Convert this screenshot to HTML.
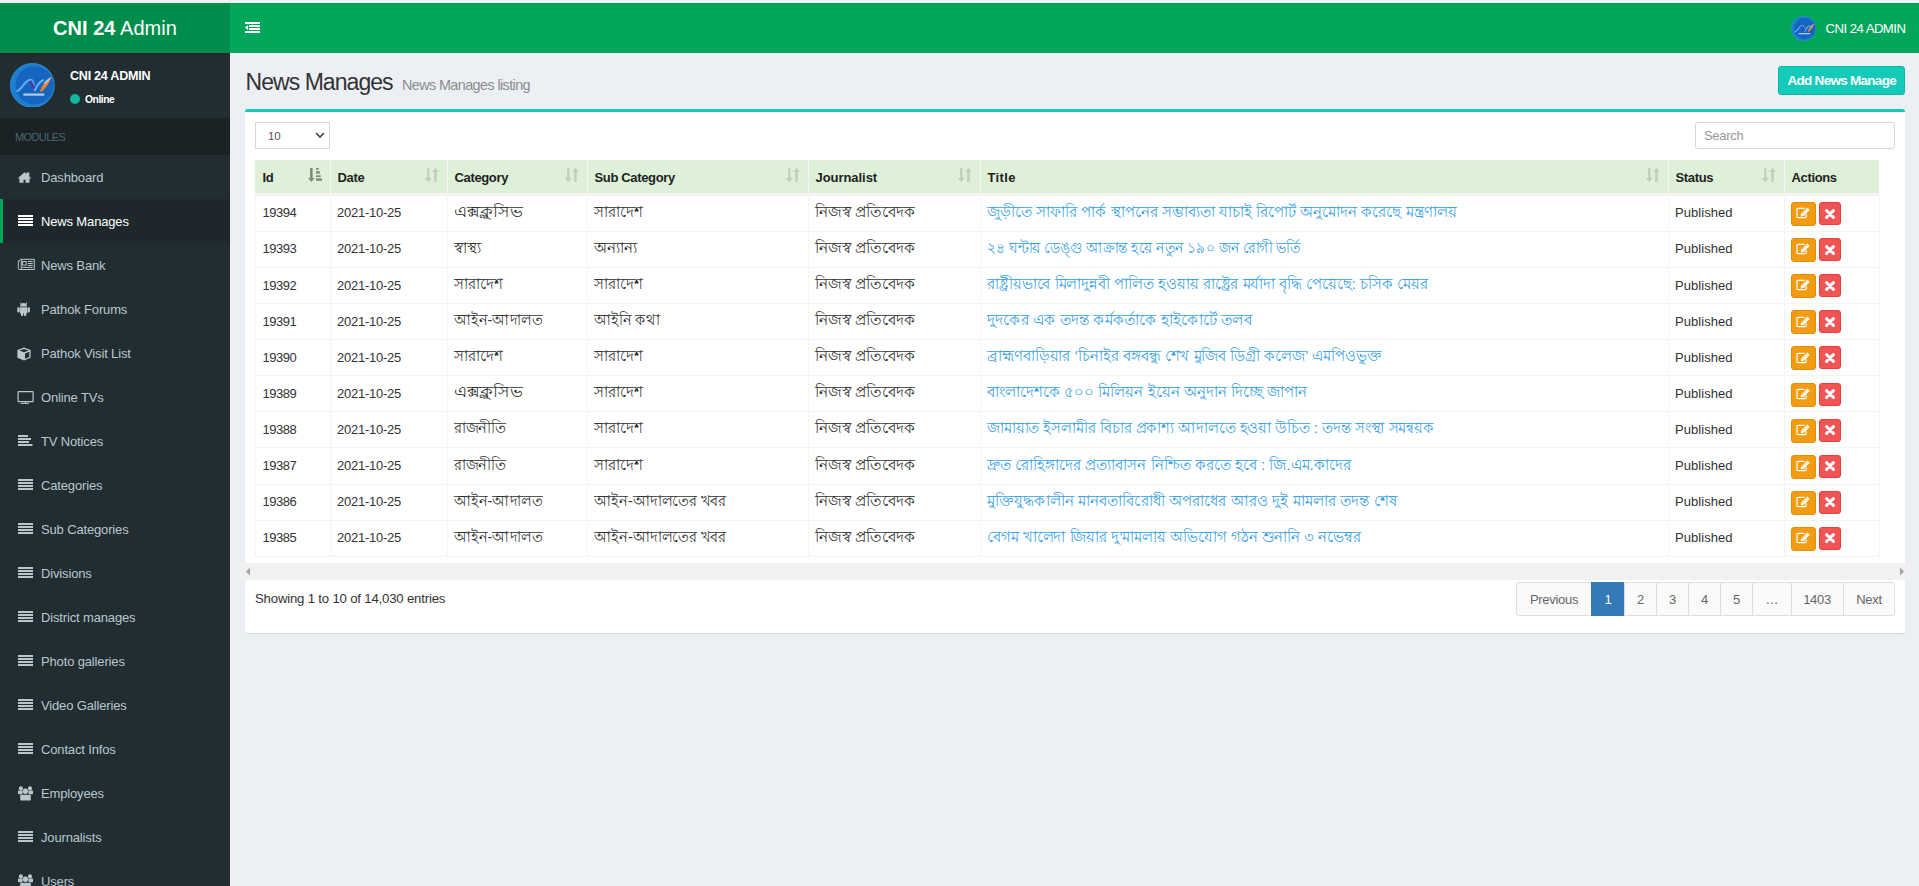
<!DOCTYPE html>
<html><head><meta charset="utf-8"><style>
*{box-sizing:border-box;margin:0;padding:0}
html,body{width:1919px;height:886px;overflow:hidden;background:#ecf0f5;font-family:"Liberation Sans",sans-serif;color:#333;font-size:13px}
.a{position:absolute}
.t{position:absolute;white-space:nowrap;line-height:1}
#strip{left:0;top:0;width:1919px;height:3px;background:#f3f3f3}
#logo{left:0;top:3px;width:230px;height:50px;background:#008d4c}
#nav{left:230px;top:3px;width:1689px;height:50px;background:#00a65a}
#side{left:0;top:53px;width:230px;height:833px;background:#222d32}
#modhdr{left:0;top:118px;width:230px;height:36.5px;background:#1a2226}
.mi{position:absolute;left:0;width:230px;height:44px;color:#b8c7ce}
.mi.act{background:#1e282c;color:#fff}
.mi.act:before{content:"";position:absolute;left:0;top:0;width:3px;height:44px;background:#00a65a}
#box{left:245px;top:109px;width:1660px;height:524px;background:#fff;border-top:3px solid #13c9b6;border-radius:3px;box-shadow:0 1px 1px rgba(0,0,0,.1)}
.hd{background:#dff0d8}
.vl{position:absolute;width:1px;background:#f4f4f4}
.hl{position:absolute;height:1px;background:#f4f4f4}
.bn{font-size:15px}
</style></head><body>
<div id="strip" class="a"></div>
<div id="logo" class="a"></div>
<div class="t" style="left:53px;top:18px;color:#fff;font-size:20px;letter-spacing:0.05px"><b>CNI 24</b> Admin</div>
<div id="nav" class="a"></div>
<svg class="a" style="left:245px;top:22px" width="15" height="12" viewBox="0 0 15 12"><g fill="#fff"><rect x="0" y="0" width="15" height="2"/><rect x="4" y="3" width="11" height="2"/><rect x="4" y="6" width="11" height="2"/><rect x="0" y="9" width="15" height="2"/><path d="M0 5.5 L3 3 V8 Z"/></g></svg>
<svg class="a" style="left:1791px;top:15.5px" width="25" height="25" viewBox="0 0 45 45"><circle cx="22.5" cy="22.5" r="22.2" fill="#1c80d0" stroke="#3d9be0" stroke-width="0.6"/><circle cx="24.8" cy="22.5" r="19.2" fill="#1565c0"/><g transform="translate(0 1.5)"><path d="M6.5 26.8 C12 26.5 14 16 20.5 15.5 C23.5 15.3 23 19 24.5 22" fill="none" stroke="#5aa8ec" stroke-width="2.4"/><path d="M20 16.5 L26 26.5" fill="none" stroke="#4a3aa8" stroke-width="2.8"/><path d="M24.5 26.5 C28 22 29 16 34 15.8" fill="none" stroke="#6fb4ee" stroke-width="2"/><path d="M30 27 C32 21 36 15 42 12.5 C40 17 37 23 31.5 27.5 Z" fill="#f0802a"/><path d="M34 19 C37 15 39.5 13.5 42 12.5 C40 15 38 17.5 35.5 20 Z" fill="#b9c6e0"/><rect x="13.5" y="29.2" width="21" height="2.2" fill="#b4cdee"/></g></svg>
<div class="t" style="left:1825.5px;top:22px;color:#fff;font-size:13.2px;letter-spacing:-0.55px">CNI 24 ADMIN</div>
<div id="side" class="a"></div>
<svg class="a" style="left:10.3px;top:62.8px" width="44.7" height="44.7" viewBox="0 0 45 45"><circle cx="22.5" cy="22.5" r="22.2" fill="#1c80d0" stroke="#3d9be0" stroke-width="0.6"/><circle cx="24.8" cy="22.5" r="19.2" fill="#1565c0"/><g transform="translate(0 1.5)"><path d="M6.5 26.8 C12 26.5 14 16 20.5 15.5 C23.5 15.3 23 19 24.5 22" fill="none" stroke="#5aa8ec" stroke-width="2.4"/><path d="M20 16.5 L26 26.5" fill="none" stroke="#4a3aa8" stroke-width="2.8"/><path d="M24.5 26.5 C28 22 29 16 34 15.8" fill="none" stroke="#6fb4ee" stroke-width="2"/><path d="M30 27 C32 21 36 15 42 12.5 C40 17 37 23 31.5 27.5 Z" fill="#f0802a"/><path d="M34 19 C37 15 39.5 13.5 42 12.5 C40 15 38 17.5 35.5 20 Z" fill="#b9c6e0"/><rect x="13.5" y="29.2" width="21" height="2.2" fill="#b4cdee"/></g></svg>
<div class="t" style="left:70px;top:70px;color:#fff;font-size:12.6px;font-weight:bold;letter-spacing:-0.27px">CNI 24 ADMIN</div>
<div class="a" style="left:70px;top:94px;width:10px;height:10px;border-radius:50%;background:#10b5a0"></div>
<div class="t" style="left:85px;top:95px;color:#fff;font-size:10.3px;font-weight:bold;letter-spacing:-0.45px">Online</div>
<div id="modhdr" class="a"></div>
<div class="t" style="left:15px;top:131.7px;color:#4b646f;font-size:11px;letter-spacing:-0.6px">MODULES</div>
<div class="mi" style="top:154.5px"><svg style="position:absolute;left:18px;top:17px" width="14" height="12" viewBox="0 0 14 12"><path fill="#b8c7ce" d="M6.5 0.3 L0 6 L0.8 6.8 L1.4 6.3 V10.7 H5.5 V7.8 H7.5 V10.7 H11.5 V6.3 L12.2 6.8 L13 6 L11.3 4.5 V0.5 H8.5 V2.1 Z"/></svg><div class="t" style="left:41px;top:16.5px;font-size:13px;letter-spacing:-0.15px">Dashboard</div></div>
<div class="mi act" style="top:198.5px"><svg style="position:absolute;left:17.5px;top:16px" width="15" height="11" viewBox="0 0 15 11"><g fill="#fff"><rect x="0" y="0" width="15" height="2"/><rect x="0" y="3" width="15" height="2"/><rect x="0" y="6" width="15" height="2"/><rect x="0" y="9" width="15" height="2"/></g></svg><div class="t" style="left:41px;top:16.5px;font-size:13px;letter-spacing:-0.15px">News Manages</div></div>
<div class="mi" style="top:242.5px"><svg style="position:absolute;left:16.5px;top:15.6px" width="19" height="13" viewBox="0 0 19 13"><g fill="none" stroke="#b8c7ce" stroke-width="1"><path d="M3 1.3 H17.3 V11.5 H2.2 Q1.3 11.5 1.3 10.6 V2.8 H3"/><path d="M4.3 1.3 V11.5"/><rect x="5.6" y="3.5" width="3.6" height="3.6"/></g><g fill="#b8c7ce"><rect x="10.8" y="3" width="4.9" height="1"/><rect x="10.8" y="5" width="4.9" height="1"/><rect x="10.8" y="6.9" width="4.9" height="1"/><rect x="5.1" y="8.9" width="10.6" height="1"/></g></svg><div class="t" style="left:41px;top:16.5px;font-size:13px;letter-spacing:-0.15px">News Bank</div></div>
<div class="mi" style="top:286.5px"><svg style="position:absolute;left:17px;top:15.2px" width="14" height="14" viewBox="0 0 14 14"><g fill="#b8c7ce"><path d="M3 4.6 Q3.2 1.3 6.6 1.1 Q10 1.3 10.2 4.6 Z"/><rect x="3.3" y="0.6" width="0.9" height="1.6"/><rect x="9" y="0.6" width="0.9" height="1.6"/><rect x="3" y="5.2" width="7.2" height="6.2" rx="0.6"/><rect x="0.3" y="5.2" width="2.4" height="5.2" rx="1"/><rect x="10.5" y="5.2" width="2.4" height="5.2" rx="1"/><rect x="3.9" y="10" width="2.3" height="4" rx="0.8"/><rect x="7" y="10" width="2.3" height="4" rx="0.8"/></g></svg><div class="t" style="left:41px;top:16.5px;font-size:13px;letter-spacing:-0.15px">Pathok Forums</div></div>
<div class="mi" style="top:330.5px"><svg style="position:absolute;left:17px;top:16px" width="14" height="14" viewBox="0 0 14 14"><path fill="#b8c7ce" d="M7 0.5 L13.6 3 V10.8 L7 13.5 L0.4 10.8 V3 Z"/><path fill="#222d32" d="M7 1.9 L11.6 3.5 L7 5.2 L2.4 3.5 Z"/><path fill="#222d32" d="M8 6.4 L12.3 4.8 V10 L8 11.8 Z"/></svg><div class="t" style="left:41px;top:16.5px;font-size:13px;letter-spacing:-0.15px">Pathok Visit List</div></div>
<div class="mi" style="top:374.5px"><svg style="position:absolute;left:17px;top:16.3px" width="17" height="14" viewBox="0 0 17 14"><g fill="none" stroke="#b8c7ce" stroke-width="1.2"><rect x="1.1" y="0.6" width="15" height="10" rx="0.6"/></g><g fill="#b8c7ce"><rect x="7.9" y="10.6" width="1.1" height="1.5"/><rect x="3.6" y="11.9" width="8.4" height="1"/></g></svg><div class="t" style="left:41px;top:16.5px;font-size:13px;letter-spacing:-0.15px">Online TVs</div></div>
<div class="mi" style="top:418.5px"><svg style="position:absolute;left:17.5px;top:16px" width="15" height="11" viewBox="0 0 15 11"><g fill="#b8c7ce"><rect x="0" y="0" width="10" height="2"/><rect x="0" y="3" width="13" height="2"/><rect x="0" y="6" width="11" height="2"/><rect x="0" y="9" width="14.5" height="2"/></g></svg><div class="t" style="left:41px;top:16.5px;font-size:13px;letter-spacing:-0.15px">TV Notices</div></div>
<div class="mi" style="top:462.5px"><svg style="position:absolute;left:17.5px;top:16px" width="15" height="11" viewBox="0 0 15 11"><g fill="#b8c7ce"><rect x="0" y="0" width="15" height="2"/><rect x="0" y="3" width="15" height="2"/><rect x="0" y="6" width="15" height="2"/><rect x="0" y="9" width="15" height="2"/></g></svg><div class="t" style="left:41px;top:16.5px;font-size:13px;letter-spacing:-0.15px">Categories</div></div>
<div class="mi" style="top:506.5px"><svg style="position:absolute;left:17.5px;top:16px" width="15" height="11" viewBox="0 0 15 11"><g fill="#b8c7ce"><rect x="0" y="0" width="15" height="2"/><rect x="0" y="3" width="15" height="2"/><rect x="0" y="6" width="15" height="2"/><rect x="0" y="9" width="15" height="2"/></g></svg><div class="t" style="left:41px;top:16.5px;font-size:13px;letter-spacing:-0.15px">Sub Categories</div></div>
<div class="mi" style="top:550.5px"><svg style="position:absolute;left:17.5px;top:16px" width="15" height="11" viewBox="0 0 15 11"><g fill="#b8c7ce"><rect x="0" y="0" width="15" height="2"/><rect x="0" y="3" width="15" height="2"/><rect x="0" y="6" width="15" height="2"/><rect x="0" y="9" width="15" height="2"/></g></svg><div class="t" style="left:41px;top:16.5px;font-size:13px;letter-spacing:-0.15px">Divisions</div></div>
<div class="mi" style="top:594.5px"><svg style="position:absolute;left:17.5px;top:16px" width="15" height="11" viewBox="0 0 15 11"><g fill="#b8c7ce"><rect x="0" y="0" width="15" height="2"/><rect x="0" y="3" width="15" height="2"/><rect x="0" y="6" width="15" height="2"/><rect x="0" y="9" width="15" height="2"/></g></svg><div class="t" style="left:41px;top:16.5px;font-size:13px;letter-spacing:-0.15px">District manages</div></div>
<div class="mi" style="top:638.5px"><svg style="position:absolute;left:17.5px;top:16px" width="15" height="11" viewBox="0 0 15 11"><g fill="#b8c7ce"><rect x="0" y="0" width="15" height="2"/><rect x="0" y="3" width="15" height="2"/><rect x="0" y="6" width="15" height="2"/><rect x="0" y="9" width="15" height="2"/></g></svg><div class="t" style="left:41px;top:16.5px;font-size:13px;letter-spacing:-0.15px">Photo galleries</div></div>
<div class="mi" style="top:682.5px"><svg style="position:absolute;left:17.5px;top:16px" width="15" height="11" viewBox="0 0 15 11"><g fill="#b8c7ce"><rect x="0" y="0" width="15" height="2"/><rect x="0" y="3" width="15" height="2"/><rect x="0" y="6" width="15" height="2"/><rect x="0" y="9" width="15" height="2"/></g></svg><div class="t" style="left:41px;top:16.5px;font-size:13px;letter-spacing:-0.15px">Video Galleries</div></div>
<div class="mi" style="top:726.5px"><svg style="position:absolute;left:17.5px;top:16px" width="15" height="11" viewBox="0 0 15 11"><g fill="#b8c7ce"><rect x="0" y="0" width="15" height="2"/><rect x="0" y="3" width="15" height="2"/><rect x="0" y="6" width="15" height="2"/><rect x="0" y="9" width="15" height="2"/></g></svg><div class="t" style="left:41px;top:16.5px;font-size:13px;letter-spacing:-0.15px">Contact Infos</div></div>
<div class="mi" style="top:770.5px"><svg style="position:absolute;left:18px;top:15px" width="16" height="15" viewBox="0 0 16 15"><g fill="#b8c7ce"><circle cx="2.9" cy="2.4" r="2.1"/><circle cx="12" cy="2.4" r="2.1"/><circle cx="7.4" cy="5.3" r="2.7"/><rect x="0" y="4.5" width="4.5" height="3.8" rx="0.7"/><rect x="10.5" y="4.5" width="4.5" height="3.8" rx="0.7"/><rect x="2.2" y="8.7" width="10.6" height="5.8" rx="0.8"/></g></svg><div class="t" style="left:41px;top:16.5px;font-size:13px;letter-spacing:-0.15px">Employees</div></div>
<div class="mi" style="top:814.5px"><svg style="position:absolute;left:17.5px;top:16px" width="15" height="11" viewBox="0 0 15 11"><g fill="#b8c7ce"><rect x="0" y="0" width="15" height="2"/><rect x="0" y="3" width="15" height="2"/><rect x="0" y="6" width="15" height="2"/><rect x="0" y="9" width="15" height="2"/></g></svg><div class="t" style="left:41px;top:16.5px;font-size:13px;letter-spacing:-0.15px">Journalists</div></div>
<div class="mi" style="top:858.5px"><svg style="position:absolute;left:18px;top:15px" width="16" height="15" viewBox="0 0 16 15"><g fill="#b8c7ce"><circle cx="2.9" cy="2.4" r="2.1"/><circle cx="12" cy="2.4" r="2.1"/><circle cx="7.4" cy="5.3" r="2.7"/><rect x="0" y="4.5" width="4.5" height="3.8" rx="0.7"/><rect x="10.5" y="4.5" width="4.5" height="3.8" rx="0.7"/><rect x="2.2" y="8.7" width="10.6" height="5.8" rx="0.8"/></g></svg><div class="t" style="left:41px;top:16.5px;font-size:13px;letter-spacing:-0.15px">Users</div></div>
<div class="t" style="left:245.5px;top:70.8px;color:#333;font-size:23px;letter-spacing:-0.95px">News Manages</div>
<div class="t" style="left:402px;top:77.5px;color:#8c8c8c;font-size:14.4px;letter-spacing:-0.6px">News Manages listing</div>
<div class="a" style="left:1778px;top:66px;width:127px;height:29px;background:#13cbb8;border:1px solid #0fb8a6;border-radius:3px"></div>
<div class="t" style="left:1787.5px;top:73.5px;color:#fff;font-size:13.5px;font-weight:bold;letter-spacing:-0.72px">Add News Manage</div>
<div id="box" class="a" style="width:1660px"></div>
<div class="a" style="left:255px;top:122px;width:75px;height:26.5px;border:1px solid #d2d6de;background:#fff"></div>
<div class="t" style="left:268px;top:131px;font-size:11.5px;color:#555;letter-spacing:-0.2px">10</div>
<svg class="a" style="left:315px;top:132px" width="10" height="7" viewBox="0 0 10 7"><path d="M1 1 L5 5 L9 1" fill="none" stroke="#444" stroke-width="1.7"/></svg>
<div class="a" style="left:1695px;top:122px;width:200px;height:27px;border:1px solid #d2d6de;border-radius:3px;background:#fff"></div>
<div class="t" style="left:1704px;top:129px;font-size:13px;color:#999;letter-spacing:-0.3px">Search</div>
<div class="a hd" style="left:255px;top:160px;width:1624px;height:33px"></div>
<div class="a" style="left:255px;top:193px;width:1624px;height:2.7px;background:#f4f4f4"></div>
<div class="t" style="left:262.5px;top:170.5px;font-size:13px;font-weight:bold;color:#222;letter-spacing:-0.35px">Id</div>
<div class="t" style="left:337.5px;top:170.5px;font-size:13px;font-weight:bold;color:#222;letter-spacing:-0.35px">Date</div>
<div class="t" style="left:454.5px;top:170.5px;font-size:13px;font-weight:bold;color:#222;letter-spacing:-0.35px">Category</div>
<div class="t" style="left:594.5px;top:170.5px;font-size:13px;font-weight:bold;color:#222;letter-spacing:-0.35px">Sub Category</div>
<div class="t" style="left:815.5px;top:170.5px;font-size:13px;font-weight:bold;color:#222;letter-spacing:-0.05px">Journalist</div>
<div class="t" style="left:987.5px;top:170.5px;font-size:13px;font-weight:bold;color:#222;letter-spacing:0.4px">Title</div>
<div class="t" style="left:1675.5px;top:170.5px;font-size:13px;font-weight:bold;color:#222;letter-spacing:-0.35px">Status</div>
<div class="t" style="left:1791.5px;top:170.5px;font-size:13px;font-weight:bold;color:#222;letter-spacing:-0.35px">Actions</div>
<svg class="a" style="left:308px;top:168px" width="15" height="14" viewBox="0 0 15 14"><g fill="#7f8c7a"><rect x="2.1" y="0" width="2.5" height="10.3"/><path d="M0 10.1 H6.6 L3.3 14 Z"/><rect x="8" y="0" width="2.6" height="1.8"/><rect x="8" y="3.2" width="3.8" height="2.5"/><rect x="8" y="7.3" width="4.8" height="1.7"/><rect x="8" y="10.3" width="6" height="2.5"/></g></svg>
<svg class="a" style="left:424.8px;top:168px" width="14" height="14" viewBox="0 0 14 14"><g fill="#bfcfba"><rect x="2.2" y="0" width="2.2" height="10.2"/><path d="M-0.2 10 H6.8 L3.3 14 Z"/><rect x="9.2" y="3.7" width="2.5" height="10.3"/><path d="M7 3.9 H13.9 L10.45 0 Z"/></g></svg>
<svg class="a" style="left:564.8px;top:168px" width="14" height="14" viewBox="0 0 14 14"><g fill="#bfcfba"><rect x="2.2" y="0" width="2.2" height="10.2"/><path d="M-0.2 10 H6.8 L3.3 14 Z"/><rect x="9.2" y="3.7" width="2.5" height="10.3"/><path d="M7 3.9 H13.9 L10.45 0 Z"/></g></svg>
<svg class="a" style="left:785.8px;top:168px" width="14" height="14" viewBox="0 0 14 14"><g fill="#bfcfba"><rect x="2.2" y="0" width="2.2" height="10.2"/><path d="M-0.2 10 H6.8 L3.3 14 Z"/><rect x="9.2" y="3.7" width="2.5" height="10.3"/><path d="M7 3.9 H13.9 L10.45 0 Z"/></g></svg>
<svg class="a" style="left:957.8px;top:168px" width="14" height="14" viewBox="0 0 14 14"><g fill="#bfcfba"><rect x="2.2" y="0" width="2.2" height="10.2"/><path d="M-0.2 10 H6.8 L3.3 14 Z"/><rect x="9.2" y="3.7" width="2.5" height="10.3"/><path d="M7 3.9 H13.9 L10.45 0 Z"/></g></svg>
<svg class="a" style="left:1645.8px;top:168px" width="14" height="14" viewBox="0 0 14 14"><g fill="#bfcfba"><rect x="2.2" y="0" width="2.2" height="10.2"/><path d="M-0.2 10 H6.8 L3.3 14 Z"/><rect x="9.2" y="3.7" width="2.5" height="10.3"/><path d="M7 3.9 H13.9 L10.45 0 Z"/></g></svg>
<svg class="a" style="left:1761.8px;top:168px" width="14" height="14" viewBox="0 0 14 14"><g fill="#bfcfba"><rect x="2.2" y="0" width="2.2" height="10.2"/><path d="M-0.2 10 H6.8 L3.3 14 Z"/><rect x="9.2" y="3.7" width="2.5" height="10.3"/><path d="M7 3.9 H13.9 L10.45 0 Z"/></g></svg>
<div class="vl" style="left:330px;top:160px;height:33px;background:#f4f4f4"></div>
<div class="vl" style="left:447px;top:160px;height:33px;background:#f4f4f4"></div>
<div class="vl" style="left:587px;top:160px;height:33px;background:#f4f4f4"></div>
<div class="vl" style="left:808px;top:160px;height:33px;background:#f4f4f4"></div>
<div class="vl" style="left:980px;top:160px;height:33px;background:#f4f4f4"></div>
<div class="vl" style="left:1668px;top:160px;height:33px;background:#f4f4f4"></div>
<div class="vl" style="left:1784px;top:160px;height:33px;background:#f4f4f4"></div>
<div class="hl" style="left:255px;top:230.8px;width:1624px"></div>
<div class="t" style="left:262.5px;top:206.3px;font-size:13px;letter-spacing:-0.45px">19394</div>
<div class="t" style="left:337px;top:206.3px;font-size:13px;letter-spacing:-0.25px">2021-10-25</div>
<div class="t bn" style="left:454px;top:201.8px;line-height:20px;transform:scaleX(1.158);transform-origin:0 0;">এক্সক্লুসিভ</div>
<div class="t bn" style="left:594px;top:201.8px;line-height:20px;">সারাদেশ</div>
<div class="t bn" style="left:815px;top:201.8px;line-height:20px;transform:scaleX(1.022);transform-origin:0 0;">নিজস্ব প্রতিবেদক</div>
<div class="t bn" style="left:987px;top:201.8px;line-height:20px;color:#3a9fe6;">জুড়ীতে সাফারি পার্ক স্থাপনের সম্ভাব্যতা যাচাই রিপোর্ট অনুমোদন করেছে মন্ত্রণালয়</div>
<div class="t" style="left:1675px;top:206.3px;font-size:13px;letter-spacing:0.05px">Published</div>
<div class="a" style="left:1791px;top:202.0px;width:25px;height:24px;background:#f39c12;border:1px solid #e08e0b;border-radius:3px"></div>
<svg class="a" style="left:1796px;top:207.2px" width="15" height="12" viewBox="0 0 15 12"><path d="M8.6 1.3 H2.2 Q1 1.3 1 2.5 V9.4 Q1 10.6 2.2 10.6 H9 Q10.2 10.6 10.2 9.4 V7.2" fill="none" stroke="#fff" stroke-width="1.25"/><path d="M4.6 9.4 L5.1 6.7 L11.3 0.6 L13.8 3 L7.5 9 Z" fill="#fff"/><path d="M6.2 7.2 L11.6 2" stroke="#f6b04a" stroke-width="0.6"/></svg>
<div class="a" style="left:1819px;top:202.0px;width:22px;height:23px;background:#f05555;border:1px solid #ee3b3b;border-radius:3px"></div>
<svg class="a" style="left:1825px;top:208.5px" width="10" height="10" viewBox="0 0 10 10"><path d="M1.6 1.6 L8.4 8.4 M8.4 1.6 L1.6 8.4" stroke="#fff" stroke-width="2.9" stroke-linecap="round"/></svg>
<div class="hl" style="left:255px;top:266.9px;width:1624px"></div>
<div class="t" style="left:262.5px;top:242.4px;font-size:13px;letter-spacing:-0.45px">19393</div>
<div class="t" style="left:337px;top:242.4px;font-size:13px;letter-spacing:-0.25px">2021-10-25</div>
<div class="t bn" style="left:454px;top:237.9px;line-height:20px;">স্বাস্থ্য</div>
<div class="t bn" style="left:594px;top:237.9px;line-height:20px;">অন্যান্য</div>
<div class="t bn" style="left:815px;top:237.9px;line-height:20px;transform:scaleX(1.022);transform-origin:0 0;">নিজস্ব প্রতিবেদক</div>
<div class="t bn" style="left:987px;top:237.9px;line-height:20px;color:#3a9fe6;transform:scaleX(0.922);transform-origin:0 0;">২৪ ঘন্টায় ডেঙ্গু আক্রান্ত হয়ে নতুন ১৯০ জন রোগী ভর্তি</div>
<div class="t" style="left:1675px;top:242.4px;font-size:13px;letter-spacing:0.05px">Published</div>
<div class="a" style="left:1791px;top:238.1px;width:25px;height:24px;background:#f39c12;border:1px solid #e08e0b;border-radius:3px"></div>
<svg class="a" style="left:1796px;top:243.3px" width="15" height="12" viewBox="0 0 15 12"><path d="M8.6 1.3 H2.2 Q1 1.3 1 2.5 V9.4 Q1 10.6 2.2 10.6 H9 Q10.2 10.6 10.2 9.4 V7.2" fill="none" stroke="#fff" stroke-width="1.25"/><path d="M4.6 9.4 L5.1 6.7 L11.3 0.6 L13.8 3 L7.5 9 Z" fill="#fff"/><path d="M6.2 7.2 L11.6 2" stroke="#f6b04a" stroke-width="0.6"/></svg>
<div class="a" style="left:1819px;top:238.1px;width:22px;height:23px;background:#f05555;border:1px solid #ee3b3b;border-radius:3px"></div>
<svg class="a" style="left:1825px;top:244.6px" width="10" height="10" viewBox="0 0 10 10"><path d="M1.6 1.6 L8.4 8.4 M8.4 1.6 L1.6 8.4" stroke="#fff" stroke-width="2.9" stroke-linecap="round"/></svg>
<div class="hl" style="left:255px;top:303.0px;width:1624px"></div>
<div class="t" style="left:262.5px;top:278.5px;font-size:13px;letter-spacing:-0.45px">19392</div>
<div class="t" style="left:337px;top:278.5px;font-size:13px;letter-spacing:-0.25px">2021-10-25</div>
<div class="t bn" style="left:454px;top:274.0px;line-height:20px;">সারাদেশ</div>
<div class="t bn" style="left:594px;top:274.0px;line-height:20px;">সারাদেশ</div>
<div class="t bn" style="left:815px;top:274.0px;line-height:20px;transform:scaleX(1.022);transform-origin:0 0;">নিজস্ব প্রতিবেদক</div>
<div class="t bn" style="left:987px;top:274.0px;line-height:20px;color:#3a9fe6;transform:scaleX(0.991);transform-origin:0 0;">রাষ্ট্রীয়ভাবে মিলাদুন্নবী পালিত হওয়ায় রাষ্ট্রের মর্যাদা বৃদ্ধি পেয়েছে: চসিক মেয়র</div>
<div class="t" style="left:1675px;top:278.5px;font-size:13px;letter-spacing:0.05px">Published</div>
<div class="a" style="left:1791px;top:274.2px;width:25px;height:24px;background:#f39c12;border:1px solid #e08e0b;border-radius:3px"></div>
<svg class="a" style="left:1796px;top:279.4px" width="15" height="12" viewBox="0 0 15 12"><path d="M8.6 1.3 H2.2 Q1 1.3 1 2.5 V9.4 Q1 10.6 2.2 10.6 H9 Q10.2 10.6 10.2 9.4 V7.2" fill="none" stroke="#fff" stroke-width="1.25"/><path d="M4.6 9.4 L5.1 6.7 L11.3 0.6 L13.8 3 L7.5 9 Z" fill="#fff"/><path d="M6.2 7.2 L11.6 2" stroke="#f6b04a" stroke-width="0.6"/></svg>
<div class="a" style="left:1819px;top:274.2px;width:22px;height:23px;background:#f05555;border:1px solid #ee3b3b;border-radius:3px"></div>
<svg class="a" style="left:1825px;top:280.7px" width="10" height="10" viewBox="0 0 10 10"><path d="M1.6 1.6 L8.4 8.4 M8.4 1.6 L1.6 8.4" stroke="#fff" stroke-width="2.9" stroke-linecap="round"/></svg>
<div class="hl" style="left:255px;top:339.1px;width:1624px"></div>
<div class="t" style="left:262.5px;top:314.6px;font-size:13px;letter-spacing:-0.45px">19391</div>
<div class="t" style="left:337px;top:314.6px;font-size:13px;letter-spacing:-0.25px">2021-10-25</div>
<div class="t bn" style="left:454px;top:310.1px;line-height:20px;transform:scaleX(0.958);transform-origin:0 0;">আইন-আদালত</div>
<div class="t bn" style="left:594px;top:310.1px;line-height:20px;transform:scaleX(0.96);transform-origin:0 0;">আইনি কথা</div>
<div class="t bn" style="left:815px;top:310.1px;line-height:20px;transform:scaleX(1.022);transform-origin:0 0;">নিজস্ব প্রতিবেদক</div>
<div class="t bn" style="left:987px;top:310.1px;line-height:20px;color:#3a9fe6;transform:scaleX(1.019);transform-origin:0 0;">দুদকের এক তদন্ত কর্মকর্তাকে হাইকোর্টে তলব</div>
<div class="t" style="left:1675px;top:314.6px;font-size:13px;letter-spacing:0.05px">Published</div>
<div class="a" style="left:1791px;top:310.3px;width:25px;height:24px;background:#f39c12;border:1px solid #e08e0b;border-radius:3px"></div>
<svg class="a" style="left:1796px;top:315.5px" width="15" height="12" viewBox="0 0 15 12"><path d="M8.6 1.3 H2.2 Q1 1.3 1 2.5 V9.4 Q1 10.6 2.2 10.6 H9 Q10.2 10.6 10.2 9.4 V7.2" fill="none" stroke="#fff" stroke-width="1.25"/><path d="M4.6 9.4 L5.1 6.7 L11.3 0.6 L13.8 3 L7.5 9 Z" fill="#fff"/><path d="M6.2 7.2 L11.6 2" stroke="#f6b04a" stroke-width="0.6"/></svg>
<div class="a" style="left:1819px;top:310.3px;width:22px;height:23px;background:#f05555;border:1px solid #ee3b3b;border-radius:3px"></div>
<svg class="a" style="left:1825px;top:316.8px" width="10" height="10" viewBox="0 0 10 10"><path d="M1.6 1.6 L8.4 8.4 M8.4 1.6 L1.6 8.4" stroke="#fff" stroke-width="2.9" stroke-linecap="round"/></svg>
<div class="hl" style="left:255px;top:375.2px;width:1624px"></div>
<div class="t" style="left:262.5px;top:350.7px;font-size:13px;letter-spacing:-0.45px">19390</div>
<div class="t" style="left:337px;top:350.7px;font-size:13px;letter-spacing:-0.25px">2021-10-25</div>
<div class="t bn" style="left:454px;top:346.2px;line-height:20px;">সারাদেশ</div>
<div class="t bn" style="left:594px;top:346.2px;line-height:20px;">সারাদেশ</div>
<div class="t bn" style="left:815px;top:346.2px;line-height:20px;transform:scaleX(1.022);transform-origin:0 0;">নিজস্ব প্রতিবেদক</div>
<div class="t bn" style="left:987px;top:346.2px;line-height:20px;color:#3a9fe6;transform:scaleX(0.993);transform-origin:0 0;">ব্রাহ্মণবাড়িয়ার ‘চিনাইর বঙ্গবন্ধু শেখ মুজিব ডিগ্রী কলেজ’ এমপিওভুক্ত</div>
<div class="t" style="left:1675px;top:350.7px;font-size:13px;letter-spacing:0.05px">Published</div>
<div class="a" style="left:1791px;top:346.4px;width:25px;height:24px;background:#f39c12;border:1px solid #e08e0b;border-radius:3px"></div>
<svg class="a" style="left:1796px;top:351.6px" width="15" height="12" viewBox="0 0 15 12"><path d="M8.6 1.3 H2.2 Q1 1.3 1 2.5 V9.4 Q1 10.6 2.2 10.6 H9 Q10.2 10.6 10.2 9.4 V7.2" fill="none" stroke="#fff" stroke-width="1.25"/><path d="M4.6 9.4 L5.1 6.7 L11.3 0.6 L13.8 3 L7.5 9 Z" fill="#fff"/><path d="M6.2 7.2 L11.6 2" stroke="#f6b04a" stroke-width="0.6"/></svg>
<div class="a" style="left:1819px;top:346.4px;width:22px;height:23px;background:#f05555;border:1px solid #ee3b3b;border-radius:3px"></div>
<svg class="a" style="left:1825px;top:352.9px" width="10" height="10" viewBox="0 0 10 10"><path d="M1.6 1.6 L8.4 8.4 M8.4 1.6 L1.6 8.4" stroke="#fff" stroke-width="2.9" stroke-linecap="round"/></svg>
<div class="hl" style="left:255px;top:411.3px;width:1624px"></div>
<div class="t" style="left:262.5px;top:386.8px;font-size:13px;letter-spacing:-0.45px">19389</div>
<div class="t" style="left:337px;top:386.8px;font-size:13px;letter-spacing:-0.25px">2021-10-25</div>
<div class="t bn" style="left:454px;top:382.3px;line-height:20px;transform:scaleX(1.158);transform-origin:0 0;">এক্সক্লুসিভ</div>
<div class="t bn" style="left:594px;top:382.3px;line-height:20px;">সারাদেশ</div>
<div class="t bn" style="left:815px;top:382.3px;line-height:20px;transform:scaleX(1.022);transform-origin:0 0;">নিজস্ব প্রতিবেদক</div>
<div class="t bn" style="left:987px;top:382.3px;line-height:20px;color:#3a9fe6;">বাংলাদেশকে ৫০০ মিলিয়ন ইয়েন অনুদান দিচ্ছে জাপান</div>
<div class="t" style="left:1675px;top:386.8px;font-size:13px;letter-spacing:0.05px">Published</div>
<div class="a" style="left:1791px;top:382.5px;width:25px;height:24px;background:#f39c12;border:1px solid #e08e0b;border-radius:3px"></div>
<svg class="a" style="left:1796px;top:387.7px" width="15" height="12" viewBox="0 0 15 12"><path d="M8.6 1.3 H2.2 Q1 1.3 1 2.5 V9.4 Q1 10.6 2.2 10.6 H9 Q10.2 10.6 10.2 9.4 V7.2" fill="none" stroke="#fff" stroke-width="1.25"/><path d="M4.6 9.4 L5.1 6.7 L11.3 0.6 L13.8 3 L7.5 9 Z" fill="#fff"/><path d="M6.2 7.2 L11.6 2" stroke="#f6b04a" stroke-width="0.6"/></svg>
<div class="a" style="left:1819px;top:382.5px;width:22px;height:23px;background:#f05555;border:1px solid #ee3b3b;border-radius:3px"></div>
<svg class="a" style="left:1825px;top:389.0px" width="10" height="10" viewBox="0 0 10 10"><path d="M1.6 1.6 L8.4 8.4 M8.4 1.6 L1.6 8.4" stroke="#fff" stroke-width="2.9" stroke-linecap="round"/></svg>
<div class="hl" style="left:255px;top:447.4px;width:1624px"></div>
<div class="t" style="left:262.5px;top:422.9px;font-size:13px;letter-spacing:-0.45px">19388</div>
<div class="t" style="left:337px;top:422.9px;font-size:13px;letter-spacing:-0.25px">2021-10-25</div>
<div class="t bn" style="left:454px;top:418.4px;line-height:20px;transform:scaleX(0.973);transform-origin:0 0;">রাজনীতি</div>
<div class="t bn" style="left:594px;top:418.4px;line-height:20px;">সারাদেশ</div>
<div class="t bn" style="left:815px;top:418.4px;line-height:20px;transform:scaleX(1.022);transform-origin:0 0;">নিজস্ব প্রতিবেদক</div>
<div class="t bn" style="left:987px;top:418.4px;line-height:20px;color:#3a9fe6;transform:scaleX(0.987);transform-origin:0 0;">জামায়াত ইসলামীর বিচার প্রকাশ্য আদালতে হওয়া উচিত : তদন্ত সংস্থা সমন্বয়ক</div>
<div class="t" style="left:1675px;top:422.9px;font-size:13px;letter-spacing:0.05px">Published</div>
<div class="a" style="left:1791px;top:418.6px;width:25px;height:24px;background:#f39c12;border:1px solid #e08e0b;border-radius:3px"></div>
<svg class="a" style="left:1796px;top:423.8px" width="15" height="12" viewBox="0 0 15 12"><path d="M8.6 1.3 H2.2 Q1 1.3 1 2.5 V9.4 Q1 10.6 2.2 10.6 H9 Q10.2 10.6 10.2 9.4 V7.2" fill="none" stroke="#fff" stroke-width="1.25"/><path d="M4.6 9.4 L5.1 6.7 L11.3 0.6 L13.8 3 L7.5 9 Z" fill="#fff"/><path d="M6.2 7.2 L11.6 2" stroke="#f6b04a" stroke-width="0.6"/></svg>
<div class="a" style="left:1819px;top:418.6px;width:22px;height:23px;background:#f05555;border:1px solid #ee3b3b;border-radius:3px"></div>
<svg class="a" style="left:1825px;top:425.1px" width="10" height="10" viewBox="0 0 10 10"><path d="M1.6 1.6 L8.4 8.4 M8.4 1.6 L1.6 8.4" stroke="#fff" stroke-width="2.9" stroke-linecap="round"/></svg>
<div class="hl" style="left:255px;top:483.5px;width:1624px"></div>
<div class="t" style="left:262.5px;top:459.0px;font-size:13px;letter-spacing:-0.45px">19387</div>
<div class="t" style="left:337px;top:459.0px;font-size:13px;letter-spacing:-0.25px">2021-10-25</div>
<div class="t bn" style="left:454px;top:454.5px;line-height:20px;transform:scaleX(0.973);transform-origin:0 0;">রাজনীতি</div>
<div class="t bn" style="left:594px;top:454.5px;line-height:20px;">সারাদেশ</div>
<div class="t bn" style="left:815px;top:454.5px;line-height:20px;transform:scaleX(1.022);transform-origin:0 0;">নিজস্ব প্রতিবেদক</div>
<div class="t bn" style="left:987px;top:454.5px;line-height:20px;color:#3a9fe6;">দ্রুত রোহিঙ্গাদের প্রত্যাবাসন নিশ্চিত করতে হবে : জি.এম.কাদের</div>
<div class="t" style="left:1675px;top:459.0px;font-size:13px;letter-spacing:0.05px">Published</div>
<div class="a" style="left:1791px;top:454.7px;width:25px;height:24px;background:#f39c12;border:1px solid #e08e0b;border-radius:3px"></div>
<svg class="a" style="left:1796px;top:459.9px" width="15" height="12" viewBox="0 0 15 12"><path d="M8.6 1.3 H2.2 Q1 1.3 1 2.5 V9.4 Q1 10.6 2.2 10.6 H9 Q10.2 10.6 10.2 9.4 V7.2" fill="none" stroke="#fff" stroke-width="1.25"/><path d="M4.6 9.4 L5.1 6.7 L11.3 0.6 L13.8 3 L7.5 9 Z" fill="#fff"/><path d="M6.2 7.2 L11.6 2" stroke="#f6b04a" stroke-width="0.6"/></svg>
<div class="a" style="left:1819px;top:454.7px;width:22px;height:23px;background:#f05555;border:1px solid #ee3b3b;border-radius:3px"></div>
<svg class="a" style="left:1825px;top:461.2px" width="10" height="10" viewBox="0 0 10 10"><path d="M1.6 1.6 L8.4 8.4 M8.4 1.6 L1.6 8.4" stroke="#fff" stroke-width="2.9" stroke-linecap="round"/></svg>
<div class="hl" style="left:255px;top:519.6px;width:1624px"></div>
<div class="t" style="left:262.5px;top:495.1px;font-size:13px;letter-spacing:-0.45px">19386</div>
<div class="t" style="left:337px;top:495.1px;font-size:13px;letter-spacing:-0.25px">2021-10-25</div>
<div class="t bn" style="left:454px;top:490.6px;line-height:20px;transform:scaleX(0.958);transform-origin:0 0;">আইন-আদালত</div>
<div class="t bn" style="left:594px;top:490.6px;line-height:20px;transform:scaleX(0.968);transform-origin:0 0;">আইন-আদালতের খবর</div>
<div class="t bn" style="left:815px;top:490.6px;line-height:20px;transform:scaleX(1.022);transform-origin:0 0;">নিজস্ব প্রতিবেদক</div>
<div class="t bn" style="left:987px;top:490.6px;line-height:20px;color:#3a9fe6;transform:scaleX(1.009);transform-origin:0 0;">মুক্তিযুদ্ধকালীন মানবতাবিরোধী অপরাধের আরও দুই মামলার তদন্ত শেষ</div>
<div class="t" style="left:1675px;top:495.1px;font-size:13px;letter-spacing:0.05px">Published</div>
<div class="a" style="left:1791px;top:490.8px;width:25px;height:24px;background:#f39c12;border:1px solid #e08e0b;border-radius:3px"></div>
<svg class="a" style="left:1796px;top:496.0px" width="15" height="12" viewBox="0 0 15 12"><path d="M8.6 1.3 H2.2 Q1 1.3 1 2.5 V9.4 Q1 10.6 2.2 10.6 H9 Q10.2 10.6 10.2 9.4 V7.2" fill="none" stroke="#fff" stroke-width="1.25"/><path d="M4.6 9.4 L5.1 6.7 L11.3 0.6 L13.8 3 L7.5 9 Z" fill="#fff"/><path d="M6.2 7.2 L11.6 2" stroke="#f6b04a" stroke-width="0.6"/></svg>
<div class="a" style="left:1819px;top:490.8px;width:22px;height:23px;background:#f05555;border:1px solid #ee3b3b;border-radius:3px"></div>
<svg class="a" style="left:1825px;top:497.3px" width="10" height="10" viewBox="0 0 10 10"><path d="M1.6 1.6 L8.4 8.4 M8.4 1.6 L1.6 8.4" stroke="#fff" stroke-width="2.9" stroke-linecap="round"/></svg>
<div class="hl" style="left:255px;top:555.7px;width:1624px"></div>
<div class="t" style="left:262.5px;top:531.2px;font-size:13px;letter-spacing:-0.45px">19385</div>
<div class="t" style="left:337px;top:531.2px;font-size:13px;letter-spacing:-0.25px">2021-10-25</div>
<div class="t bn" style="left:454px;top:526.7px;line-height:20px;transform:scaleX(0.958);transform-origin:0 0;">আইন-আদালত</div>
<div class="t bn" style="left:594px;top:526.7px;line-height:20px;transform:scaleX(0.968);transform-origin:0 0;">আইন-আদালতের খবর</div>
<div class="t bn" style="left:815px;top:526.7px;line-height:20px;transform:scaleX(1.022);transform-origin:0 0;">নিজস্ব প্রতিবেদক</div>
<div class="t bn" style="left:987px;top:526.7px;line-height:20px;color:#3a9fe6;transform:scaleX(0.99);transform-origin:0 0;">বেগম খালেদা জিয়ার দু’মামলায় অভিযোগ গঠন শুনানি ৩ নভেম্বর</div>
<div class="t" style="left:1675px;top:531.2px;font-size:13px;letter-spacing:0.05px">Published</div>
<div class="a" style="left:1791px;top:526.9px;width:25px;height:24px;background:#f39c12;border:1px solid #e08e0b;border-radius:3px"></div>
<svg class="a" style="left:1796px;top:532.1px" width="15" height="12" viewBox="0 0 15 12"><path d="M8.6 1.3 H2.2 Q1 1.3 1 2.5 V9.4 Q1 10.6 2.2 10.6 H9 Q10.2 10.6 10.2 9.4 V7.2" fill="none" stroke="#fff" stroke-width="1.25"/><path d="M4.6 9.4 L5.1 6.7 L11.3 0.6 L13.8 3 L7.5 9 Z" fill="#fff"/><path d="M6.2 7.2 L11.6 2" stroke="#f6b04a" stroke-width="0.6"/></svg>
<div class="a" style="left:1819px;top:526.9px;width:22px;height:23px;background:#f05555;border:1px solid #ee3b3b;border-radius:3px"></div>
<svg class="a" style="left:1825px;top:533.4px" width="10" height="10" viewBox="0 0 10 10"><path d="M1.6 1.6 L8.4 8.4 M8.4 1.6 L1.6 8.4" stroke="#fff" stroke-width="2.9" stroke-linecap="round"/></svg>
<div class="vl" style="left:255px;top:195.7px;height:361.0px"></div>
<div class="vl" style="left:330px;top:195.7px;height:361.0px"></div>
<div class="vl" style="left:447px;top:195.7px;height:361.0px"></div>
<div class="vl" style="left:587px;top:195.7px;height:361.0px"></div>
<div class="vl" style="left:808px;top:195.7px;height:361.0px"></div>
<div class="vl" style="left:980px;top:195.7px;height:361.0px"></div>
<div class="vl" style="left:1668px;top:195.7px;height:361.0px"></div>
<div class="vl" style="left:1784px;top:195.7px;height:361.0px"></div>
<div class="vl" style="left:1879px;top:195.7px;height:361.0px"></div>
<div class="a" style="left:240px;top:563px;width:1670px;height:17px;background:#f1f1f1"></div>
<svg class="a" style="left:245px;top:567px" width="6" height="9" viewBox="0 0 6 9"><path d="M5 0.5 V8.5 L1 4.5 Z" fill="#a3a3a3"/></svg>
<svg class="a" style="left:1899px;top:567px" width="6" height="9" viewBox="0 0 6 9"><path d="M1 0.5 V8.5 L5 4.5 Z" fill="#a3a3a3"/></svg>
<div class="t" style="left:255px;top:592px;font-size:13.2px;letter-spacing:-0.19px">Showing 1 to 10 of 14,030 entries</div>
<div class="a" style="left:1516px;top:582px;width:76.0px;height:34px;background:#fafafa;border:1px solid #ddd;border-radius:3px 0 0 3px;"></div>
<div class="t" style="left:1516px;top:593px;width:76.0px;text-align:center;font-size:13px;color:#666;letter-spacing:-0.3px">Previous</div>
<div class="a" style="left:1591px;top:582px;width:34.0px;height:34px;background:#337ab7;border:1px solid #337ab7;"></div>
<div class="t" style="left:1591px;top:593px;width:34.0px;text-align:center;font-size:13px;color:#fff;letter-spacing:-0.3px">1</div>
<div class="a" style="left:1624px;top:582px;width:33.0px;height:34px;background:#fafafa;border:1px solid #ddd;"></div>
<div class="t" style="left:1624px;top:593px;width:33.0px;text-align:center;font-size:13px;color:#666;letter-spacing:-0.3px">2</div>
<div class="a" style="left:1656px;top:582px;width:33.0px;height:34px;background:#fafafa;border:1px solid #ddd;"></div>
<div class="t" style="left:1656px;top:593px;width:33.0px;text-align:center;font-size:13px;color:#666;letter-spacing:-0.3px">3</div>
<div class="a" style="left:1688px;top:582px;width:33.0px;height:34px;background:#fafafa;border:1px solid #ddd;"></div>
<div class="t" style="left:1688px;top:593px;width:33.0px;text-align:center;font-size:13px;color:#666;letter-spacing:-0.3px">4</div>
<div class="a" style="left:1720px;top:582px;width:33.0px;height:34px;background:#fafafa;border:1px solid #ddd;"></div>
<div class="t" style="left:1720px;top:593px;width:33.0px;text-align:center;font-size:13px;color:#666;letter-spacing:-0.3px">5</div>
<div class="a" style="left:1752px;top:582px;width:39.5px;height:34px;background:#fafafa;border:1px solid #ddd;"></div>
<div class="t" style="left:1752px;top:593px;width:39.5px;text-align:center;font-size:13px;color:#666;letter-spacing:-0.3px">…</div>
<div class="a" style="left:1790.5px;top:582px;width:53.1px;height:34px;background:#fafafa;border:1px solid #ddd;"></div>
<div class="t" style="left:1790.5px;top:593px;width:53.1px;text-align:center;font-size:13px;color:#666;letter-spacing:-0.3px">1403</div>
<div class="a" style="left:1842.6px;top:582px;width:52.9px;height:34px;background:#fafafa;border:1px solid #ddd;border-radius:0 3px 3px 0;"></div>
<div class="t" style="left:1842.6px;top:593px;width:52.9px;text-align:center;font-size:13px;color:#666;letter-spacing:-0.3px">Next</div>
</body></html>
